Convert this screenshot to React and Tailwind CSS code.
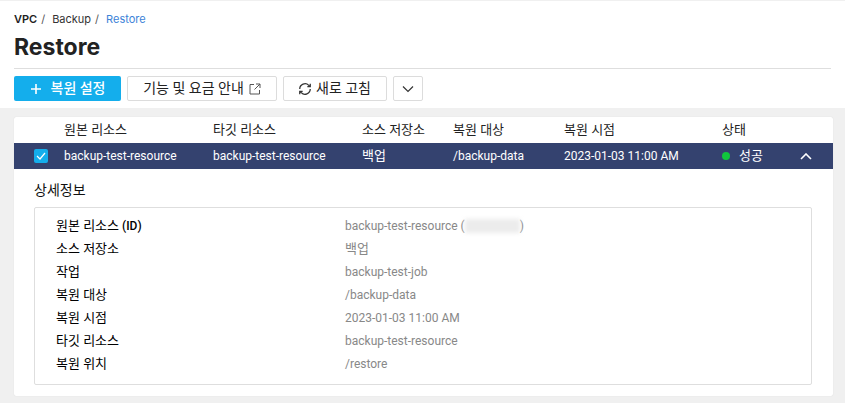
const ko = '"Roboto","Noto Sans CJK KR",sans-serif';

const headers = [
  ['원본 리소스', 'w-[149px]'],
  ['타깃 리소스', 'w-[149px]'],
  ['소스 저장소', 'w-[91px]'],
  ['복원 대상', 'w-[111px]'],
  ['복원 시점', 'w-[158px]'],
  ['상태', 'flex-1'],
];

const details = [
  ['원본 리소스', ' (ID)', null],
  ['소스 저장소', '', '백업'],
  ['작업', '', 'backup-test-job'],
  ['복원 대상', '', '/backup-data'],
  ['복원 시점', '', '2023-01-03 11:00 AM'],
  ['타깃 리소스', '', 'backup-test-resource'],
  ['복원 위치', '', '/restore'],
];

function Button({ className = '', children }) {
  return (
    <button className={`h-[25px] flex items-center justify-center rounded-[2px] border border-[#dcdcdc] bg-white text-[14px] text-[#222] ${className}`}>
      {children}
    </button>
  );
}

export default function App() {
  return (
    <div className="w-[845px] h-[403px] overflow-hidden bg-[#f0f0f0] text-[#222]" style={{ fontFamily: ko }}>
      <div className="h-[108px] bg-white border-t border-[#f0f0f0] px-[14px]">
        <div className="flex items-center h-[14px] mt-[11px] text-[11px] leading-[14px]" style={{ fontFamily: '"Inter","Noto Sans CJK KR",sans-serif' }}>
          <span className="font-semibold">VPC</span>
          <span className="ml-[4px] text-[#555]">/</span>
          <span className="ml-[7px] text-[#333]">Backup</span>
          <span className="ml-[4px] text-[#555]">/</span>
          <span className="ml-[7px] text-[#3d83d8]">Restore</span>
        </div>
        <h1 className="mt-[6px] h-[35px] text-[23px] leading-[30px] font-bold text-[#222]" style={{ fontFamily: '"Inter",sans-serif' }}>Restore</h1>
        <div className="border-t border-[#dedede] mt-[1px] flex gap-[6px] pt-[7px]">
          <button className="h-[25px] w-[107px] flex items-center justify-center rounded-[2px] bg-[#14aeec] text-white text-[14px] font-medium">
            <svg width="12" height="12" viewBox="0 0 12 12" className="mr-[9px]" fill="none" stroke="#fff" strokeWidth="1.6"><path d="M6 1v10M1 6h10" /></svg>
            복원 설정
          </button>
          <Button className="w-[150px]">
            기능 및 요금 안내
            <svg width="12" height="12" viewBox="0 0 12 12" className="ml-[5px]" fill="none" stroke="#555" strokeWidth="1"><path d="M5 1.5H1v9.5h9.5V7M7 1h4v4M11 1L5.5 6.5" /></svg>
          </Button>
          <Button className="w-[104px]">
            <svg width="14" height="14" viewBox="0 0 24 24" className="mr-[4px] -ml-[1px]" fill="none" stroke="#333" strokeWidth="2.2"><path d="M3 12a9 9 0 0 1 15.5-6.2L21 8M21 3v5h-5M21 12a9 9 0 0 1-15.5 6.2L3 16M3 21v-5h5" /></svg>
            새로 고침
          </Button>
          <Button className="w-[30px]">
            <svg width="12" height="8" viewBox="0 0 12 8" fill="none" stroke="#333" strokeWidth="1.2"><path d="M1 1.5l5 5 5-5" /></svg>
          </Button>
        </div>
      </div>

      <div className="mx-[14px] mt-[9px] w-[819px] h-[279px] rounded-[2px] bg-white shadow-[0_0_1px_rgba(0,0,0,0.15)]">
        <div className="flex items-center h-[25px] pl-[50px] text-[13px] text-[#222]">
          {headers.map(([t, w]) => (
            <div key={t} className={w}>{t}</div>
          ))}
        </div>
        <div className="flex items-center h-[28px] bg-[#34426f] border-y border-white text-white text-[12px]">
          <span className="ml-[20px] w-[14px] h-[14px] rounded-[2px] bg-[#14aeec] flex items-center justify-center">
            <svg width="10" height="8" viewBox="0 0 10 8" fill="none" stroke="#fff" strokeWidth="1.2"><path d="M1 4l3 3 5-6" /></svg>
          </span>
          <div className="ml-[16px] w-[149px]">backup-test-resource</div>
          <div className="w-[149px]">backup-test-resource</div>
          <div className="w-[91px] text-[13px]">백업</div>
          <div className="w-[111px]">/backup-data</div>
          <div className="w-[158px]">2023-01-03 11:00 AM</div>
          <div className="flex items-center flex-1">
            <span className="w-[8px] h-[8px] rounded-full bg-[#10c63d]" />
            <span className="ml-[9px] text-[13px]">성공</span>
            <svg width="12" height="7" viewBox="0 0 12 7" className="ml-[37px]" fill="none" stroke="#fff" strokeWidth="1.6"><path d="M1 6l5-5 5 5" /></svg>
          </div>
        </div>
        <div className="px-[20px] pt-[11px]">
          <div className="text-[14px] leading-[18px] text-[#111]">상세정보</div>
          <div className="mt-[8px] w-[778px] h-[178px] border border-[#dedede] rounded-[2px] pt-[6px] pl-[21px]">
            {details.map(([k, suffix, v]) => (
              <div key={k} className="flex h-[23px] items-center text-[12px]">
                <div className="w-[289px] text-[#000]">
                  <span className="text-[13px]">{k}</span><span className="font-medium">{suffix}</span>
                </div>
                <div className="text-[#888]">
                  {v === '백업' ? <span className="text-[13px]">{v}</span> : v ?? (
                    <span className="flex items-center">
                      backup-test-resource (
                      <span className="w-[55px] h-[14px] bg-[#ececec] blur-[2px]" />
                      )
                    </span>
                  )}
                </div>
              </div>
            ))}
          </div>
        </div>
      </div>
    </div>
  );
}
